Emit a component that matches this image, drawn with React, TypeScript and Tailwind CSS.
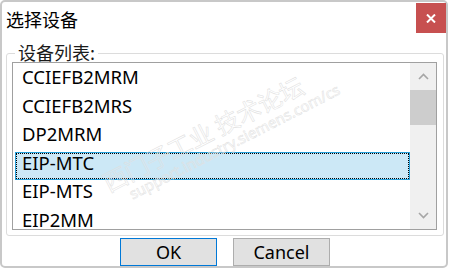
import React from "react";

// device names shown in the list box
const devices = ["CCIEFB2MRM", "CCIEFB2MRS", "DP2MRM", "EIP-MTC", "EIP-MTS", "EIP2MM"];
const selected = "EIP-MTC";

function Chevron({ up }: { up?: boolean }) {
  return (
    <svg width="11" height="7" viewBox="0 0 11 7">
      <polyline
        points={up ? "1,6 5.5,1.5 10,6" : "1,1 5.5,5.5 10,1"}
        fill="none"
        stroke="#a6a6a6"
        strokeWidth="1.6"
      />
    </svg>
  );
}

export default function App() {
  return (
    <div className="w-[450px] h-[270px] bg-white relative overflow-hidden font-['Noto_Sans','Noto_Sans_CJK_SC',sans-serif] text-black">
      {/* dialog window */}
      <div className="w-[448px] h-[268px] border-2 border-[#c8c8c8] rounded-[5px] bg-white flex flex-col">
        {/* title bar */}
        <div className="h-[33px] flex justify-between">
          <span className="self-center pl-[4px] text-[18px] leading-[20px] font-['Noto_Sans_CJK_SC',sans-serif]">
            选择设备
          </span>
          <button className="mt-[1px] w-[30px] h-[30px] bg-[#c75050] flex items-center justify-center">
            <svg width="10" height="9" viewBox="0 0 10 9">
              <path d="M1 0.5 L9 8.5 M9 0.5 L1 8.5" stroke="white" strokeWidth="2" />
            </svg>
          </button>
        </div>

        {/* group box */}
        <div className="relative ml-[4px] mt-[18px] w-[438px] h-[183px] border border-[#dcdcdc] rounded-[3px] pl-[5px] pt-[8px]">
          <span className="absolute -top-[12px] left-[8px] bg-white px-[3px] text-[18px] leading-[20px] font-['Noto_Sans_CJK_SC',sans-serif] text-[#1a1a1a]">
            设备列表:
          </span>

          {/* list box */}
          <div className="w-[425px] h-[168px] border border-[#a0a0a0] flex bg-white">
            <div className="flex-1 pt-[3px] pl-[2px] overflow-hidden">
              {devices.map((d) => (
                <div
                  key={d}
                  className={`h-[28.5px] border ${
                    d === selected ? "border-[#26a0da] bg-[#cce8f6]" : "border-transparent"
                  }`}
                >
                  <div
                    className={`h-full border border-dotted px-[5px] text-[18.5px] leading-[18px] ${
                      d === selected ? "border-black" : "border-transparent"
                    }`}
                  >
                    {d}
                  </div>
                </div>
              ))}
            </div>

            {/* scrollbar */}
            <div className="w-[26px] bg-[#f0f0f0] flex flex-col">
              <div className="h-[27px] flex items-center justify-center">
                <Chevron up />
              </div>
              <div className="h-[35px] bg-[#cdcdcd]" />
              <div className="flex-1" />
              <div className="h-[27px] flex items-center justify-center">
                <Chevron />
              </div>
            </div>
          </div>
        </div>

        {/* buttons */}
        <div className="mt-[2px] flex gap-[16px] pl-[118px]">
          <button className="w-[97px] h-[28px] border border-[#0078d7] bg-[#e1e1e1] text-[18px] leading-[22px] flex items-center justify-center">
            OK
          </button>
          <button className="w-[97px] h-[28px] border border-[#adadad] bg-[#e1e1e1] text-[18px] leading-[22px] flex items-center justify-center">
            Cancel
          </button>
        </div>
      </div>

      {/* forum watermark */}
      <div className="absolute left-[108px] top-[170px] -rotate-[27deg] origin-left pointer-events-none select-none">
        <div className="text-[24px] leading-[26px] whitespace-nowrap text-transparent [-webkit-text-stroke:0.5px_#e0e0e0] font-['Noto_Sans_CJK_SC',sans-serif]">
          西门子工业 技术论坛
        </div>
        <div className="text-[15px] leading-[16px] whitespace-nowrap pl-[18px] text-transparent [-webkit-text-stroke:0.5px_#e0e0e0]">
          support.industry.siemens.com/cs
        </div>
      </div>
    </div>
  );
}
